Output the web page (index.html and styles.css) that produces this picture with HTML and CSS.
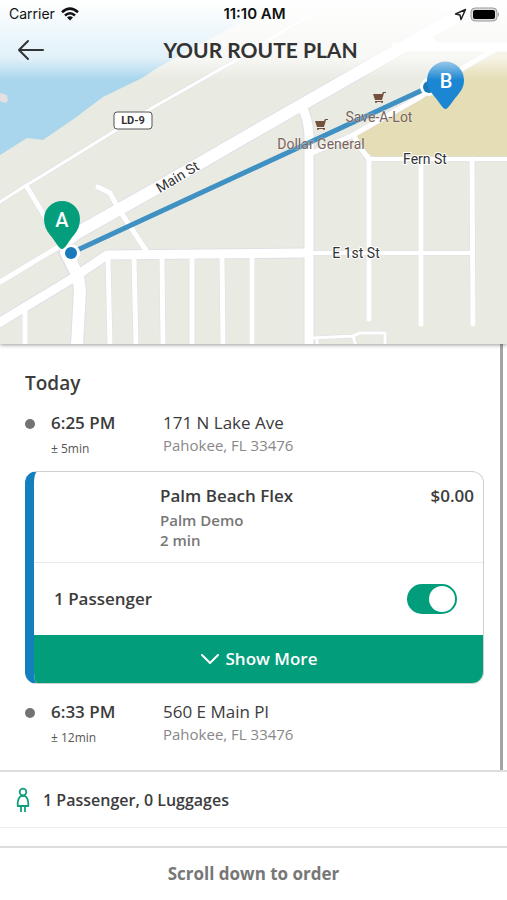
FILE: index.html
```
<!DOCTYPE html>
<html lang="en">
<head>
  <meta charset="utf-8">
  <meta name="viewport" content="width=device-width">
  <title>Your Route Plan</title>
  <link rel="stylesheet" href="styles.css">
</head>
<body>
  <section class="map">
    <svg class="map_canvas" viewBox="0 0 507 344" preserveAspectRatio="xMidYMid slice">
      <rect width="507" height="344" fill="#e9eae1"/>
      <path fill="#a9d6ed" d="M0 0H278L254 15L157 68L142 78L103 97L75 118L43 140L27 138L0 155Z"/>
      <path fill="#e6dfe2" d="M0 93L7 95L8 101L5 103L0 101Z"/>
      <path fill="#e4ddb5" d="M355 136L420 99L470 67L500 51H507V157H373L366 151Z"/>
      <!-- road edges, then the roads on top -->
      <g fill="none" stroke="#dfdfe7" stroke-linejoin="round">
        <path stroke-width="4" d="M0 202L25 186L45 174L113 132L152 108L233 62L306 17"/>
        <path stroke-width="14" d="M66 240L77 233L157 188L254 132L303 104L396 51L480 4"/>
        <path stroke-width="11" d="M-3 324L73 278L107 255L309 253"/>
        <path stroke-width="14" d="M63 248L78 276L80 290L77 346"/>
        <path stroke-width="11" d="M302 107Q308 118 309 135V346"/>
        <path stroke-width="6" d="M0 282L60 246M27 187L65 250M98 187L110 193L118 208L147 252M25 310V346M108 257L110 346M134 257L136 346M162 257L163 346M192 257V346M222 257L223 346M252 257V346M312 153L353 135L420 97L463 68L500 46M353 135L362 150L369 159V319M421 159V324M472 159L473 324"/>
        <path stroke-width="5" d="M368 159H507M309 253H473"/>
        <path stroke-width="4" d="M313 338L353 336L360 333H385V346M317 338V346M353 336L356 346"/>
      </g>
      <g fill="none" stroke="#fff" stroke-linejoin="round" stroke-linecap="round">
        <path stroke-width="3" d="M0 202L25 186L45 174L113 132L152 108L233 62L306 17"/>
        <path stroke-width="12" d="M70 238L77 233L157 188L254 132L303 104L396 51L480 4"/>
        <path stroke-width="9" d="M-3 324L73 278L107 255L309 253M396 47H510M426 37L436 46"/>
        <path stroke-width="12" d="M66 252L78 276L80 290L77 346"/>
        <path stroke-width="9" d="M302 107Q308 118 309 135V346"/>
        <path stroke-width="5" d="M0 282L60 246M27 187L65 250M98 187L110 193L118 208L147 252M25 310V346M108 257L110 346M134 257L136 346M162 257L163 346M192 257V346M222 257L223 346M252 257V346M312 153L353 135L420 97L463 68L500 46M353 135L362 150L369 159V319M421 159V324M472 159L473 324"/>
        <path stroke-width="4" d="M368 159H507M309 253H473"/>
        <path stroke-width="3" d="M313 338L353 336L360 333H385V346M317 338V346M353 336L356 346"/>
      </g>
      <rect x="114" y="112" width="38" height="17" rx="3" fill="#fff" stroke="#555"/>
      <text class="map_shield" x="133" y="124">LD-9</text>
      <path stroke="#3f90c3" stroke-width="5" d="M71 253L429 87"/>
      <text class="map_street" x="180" y="181" transform="rotate(-31 180 181)">Main St</text>
      <text class="map_street" x="425" y="164">Fern St</text>
      <text class="map_street" x="356" y="258">E 1st St</text>
      <text class="map_place" x="379" y="122">Save-A-Lot</text>
      <text class="map_place" x="321" y="149">Dollar General</text>
      <g id="cart" fill="#74503f">
        <path d="M373 94H382L383 92H386V93H384L382 100H375Z"/>
        <path d="M375 101H383V102H375Z"/>
        <circle cx="376" cy="102" r="1"/>
        <circle cx="382" cy="102" r="1"/>
      </g>
      <use href="#cart" x="-58" y="27"/>
      <circle cx="71" cy="253" r="9" fill="#fff"/>
      <circle cx="71" cy="253" r="6" fill="#187abb"/>
      <circle cx="429" cy="87" r="9" fill="#fff"/>
      <circle cx="429" cy="87" r="6" fill="#187abb"/>
      <path fill="#049e7c" d="M62 249C59 249 56 242 50 235C46 230 44 225 44 219A18 18 0 0 1 80 219C80 225 78 230 74 235C68 242 65 249 62 249Z"/>
      <text class="map_pin" x="62" y="227">A</text>
      <path fill="#1b86d1" d="M445.500 109C443 109 440 103 434 96C429 90 427 86 427 80A18 18 0 0 1 464 80C464 86 462 90 457 96C451 103 448 109 445.500 109Z"/>
      <text class="map_pin" x="446" y="88">B</text>
    </svg>
    <div class="top">
      <div class="status">
        <div class="status_carrier">
          Carrier
          <svg width="18" height="14" viewBox="0 0 18 14" fill="none" stroke="#111" stroke-width="2.600">
            <path d="M1 5.200Q9 -2 17 5.200"/>
            <path d="M4 8.500Q9 4 14 8.500"/>
            <path fill="#111" stroke="none" d="M6 10.500Q9 8 12 10.500L9 13.500Z"/>
          </svg>
        </div>
        <div class="status_time">11:10 AM</div>
        <div class="status_icons">
          <svg width="13" height="13" viewBox="0 0 13 13" fill="none" stroke="#222" stroke-width="1.500" stroke-linejoin="round">
            <path d="M11.500 1.500L1.500 6L6 7L7 11.500Z"/>
          </svg>
          <svg width="30" height="15" viewBox="0 0 30 15">
            <rect x="1" y="1" width="26" height="13" rx="4" fill="#ddd" stroke="#999"/>
            <rect x="3" y="3" width="22" height="9" rx="2" fill="#000"/>
            <path fill="#999" d="M28 5Q30 7.500 28 10Z"/>
          </svg>
        </div>
      </div>
      <div class="bar">
        <button class="back" aria-label="Back">
          <svg width="28" height="22" viewBox="0 0 28 22" fill="none" stroke="#333" stroke-width="2" stroke-linecap="round" stroke-linejoin="round">
            <path d="M11 2L2 11L11 20M2 11H26"/>
          </svg>
        </button>
        <h1 class="title">YOUR ROUTE PLAN</h1>
      </div>
    </div>
  </section>

  <main class="plan">
    <h2 class="day">Today</h2>
    <div class="stop">
      <div class="stop_time">6:25 PM</div>
      <div class="stop_place">171 N Lake Ave</div>
      <div class="stop_margin">± 5min</div>
      <div class="stop_city">Pahokee, FL 33476</div>
    </div>
    <article class="card">
      <div class="ride">
        <div>
          <h3 class="ride_name">Palm Beach Flex</h3>
          <p>Palm Demo</p>
          <p>2 min</p>
        </div>
        <div class="price">$0.00</div>
      </div>
      <div class="passenger">
        <label for="passenger">1 Passenger</label>
        <input class="switch" type="checkbox" id="passenger" checked>
      </div>
      <button class="more">
        <svg width="20" height="12" viewBox="0 0 20 12" fill="none" stroke="#fff" stroke-width="2" stroke-linecap="round" stroke-linejoin="round">
          <path d="M2 2L10 10L18 2"/>
        </svg>
        Show More
      </button>
    </article>
    <div class="stop">
      <div class="stop_time">6:33 PM</div>
      <div class="stop_place">560 E Main Pl</div>
      <div class="stop_margin">± 12min</div>
      <div class="stop_city">Pahokee, FL 33476</div>
    </div>
  </main>

  <div class="summary">
    <svg width="14" height="26" viewBox="0 0 14 26" fill="none" stroke="#129f7e" stroke-width="1.800">
      <circle cx="7" cy="5" r="3.300"/>
      <path stroke-linejoin="round" d="M5 9H9Q12 11 12.300 16V19H1.700V16Q2 11 5 9Z"/>
      <path d="M5 19V25M9 19V25"/>
    </svg>
    1 Passenger, 0 Luggages
  </div>
  <footer class="order">Scroll down to order</footer>
</body>
</html>
```
FILE: styles.css
```
*, *:before, *:after {
  box-sizing: border-box;
}
body {
  display: flex;
  flex-direction: column;
  min-height: 100vh;
  margin: 0;
  background: #fff;
  color: #3c3c3c;
  font-family: "Open Sans", sans-serif;
  font-size: 16px;
  line-height: 24px;
}
h1, h2, h3, p {
  margin: 0;
}
button {
  border: none;
  padding: 0;
  font: inherit;
  cursor: pointer;
}
svg {
  display: block;
  flex: none;
}

.map {
  position: relative;
  height: 344px;
  box-shadow: 0 1px 4px rgba(0, 0, 0, 0.4);
}
.map_canvas {
  position: absolute;
  width: 100%;
  height: 100%;
}
.map text {
  text-anchor: middle;
  font-family: Roboto, sans-serif;
}
.map_street {
  font-size: 14px;
  fill: #333;
  stroke: #fff;
  stroke-width: 2px;
  paint-order: stroke;
}
.map_place {
  font-size: 14px;
  fill: #79625b;
  stroke: rgba(255, 255, 255, 0.5);
  stroke-width: 1px;
  paint-order: stroke;
}
.map_shield {
  font-size: 11px;
  font-weight: bold;
  fill: #333;
}
.map_pin {
  font-size: 20px;
  font-weight: 500;
  fill: #fff;
}

.top {
  position: relative;
  height: 80px;
  background: linear-gradient(#fff, rgba(255, 255, 255, 0.65) 58px, rgba(255, 255, 255, 0));
}
.status {
  display: grid;
  grid-template-columns: 1fr auto 1fr;
  align-items: center;
  height: 28px;
  padding: 0 7px 0 9px;
  color: #111;
  font-family: Inter, sans-serif;
  font-size: 14px;
}
.status_carrier, .status_icons {
  display: flex;
  align-items: center;
  gap: 6px;
}
.status_icons {
  justify-content: flex-end;
  gap: 3px;
}
.status_time {
  font-size: 15px;
  font-weight: 600;
}
.bar {
  display: grid;
  grid-template-columns: 28px 1fr 28px;
  align-items: center;
  height: 44px;
  padding: 0 17px;
}
.back {
  background: none;
}
.title {
  padding-left: 14px;
  text-align: center;
  font-family: Lato, sans-serif;
  font-size: 21px;
  font-weight: bold;
  color: #333;
}

.plan {
  flex: 1;
  margin-right: 4px;
  padding: 27px 16px 18px 25px;
  border-right: 3px solid #a5a5a5;
}
.day {
  margin-bottom: 16px;
  font-size: 19px;
  line-height: 24px;
  font-weight: 600;
}
.stop {
  display: grid;
  grid-template-columns: 112px 1fr;
  padding-left: 26px;
}
.stop_time {
  font-weight: 600;
  font-size: 17px;
}
.stop_time:before {
  content: "";
  float: left;
  width: 10px;
  height: 10px;
  margin: 8px 0 0 -26px;
  border-radius: 50%;
  background: #737373;
}
.stop_place {
  font-size: 17px;
}
.stop_margin {
  padding-top: 2px;
  font-size: 12px;
  color: #555;
}
.stop_city {
  font-size: 15px;
  line-height: 20px;
  color: #888;
}

.card {
  margin: 10px 0 16px;
  border: 1px solid #d0d0d0;
  border-left: 9px solid #147fbd;
  border-radius: 12px;
  overflow: hidden;
}
.ride {
  display: flex;
  justify-content: space-between;
  padding: 12px 9px 12px 126px;
  border-bottom: 1px solid #e8e8ee;
  font-size: 17px;
  font-weight: 600;
}
.ride_name {
  margin-bottom: 2px;
  font-size: 17px;
  font-weight: 600;
}
.ride p {
  font-size: 15px;
  line-height: 20px;
  color: #777;
}
.passenger {
  display: flex;
  align-items: center;
  justify-content: space-between;
  height: 72px;
  padding: 0 26px 0 20px;
  font-size: 17px;
  font-weight: 600;
}
.switch {
  appearance: none;
  display: flex;
  justify-content: flex-end;
  width: 50px;
  height: 30px;
  margin: 0;
  padding: 2px;
  border-radius: 15px;
  background: #029e7b;
}
.switch:before {
  content: "";
  width: 26px;
  border-radius: 50%;
  background: #fff;
}
.switch:not(:checked) {
  justify-content: flex-start;
  background: #bbb;
}
.more {
  display: flex;
  align-items: center;
  justify-content: center;
  gap: 6px;
  width: 100%;
  height: 48px;
  background: #029e7b;
  color: #fff;
  font-size: 17px;
  font-weight: 600;
}

.summary {
  display: flex;
  align-items: center;
  gap: 13px;
  height: 58px;
  padding: 0 16px;
  border-top: 2px solid #ddd;
  border-bottom: 1px solid #eee;
  font-size: 16px;
  font-weight: 600;
}
.order {
  margin-top: 18px;
  padding: 14px 0;
  border-top: 2px solid #ddd;
  text-align: center;
  font-size: 17px;
  font-weight: 700;
  color: #777;
}
```
